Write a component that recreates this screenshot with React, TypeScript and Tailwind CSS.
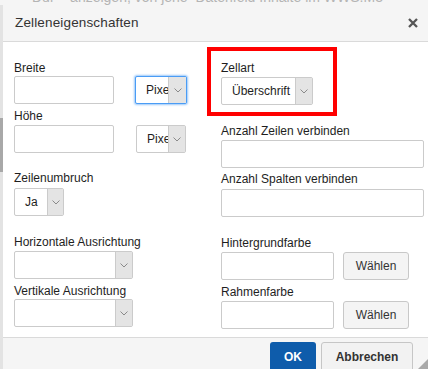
import React from "react";

function Chevron() {
  return (
    <svg width="8" height="5" viewBox="0 0 8 5" fill="none">
      <polyline points="0.5,0.5 4,4 7.5,0.5" stroke="#8a8a8a" strokeWidth="1" />
    </svg>
  );
}

function Select({
  value,
  width,
  arrow = 17,
  focused = false,
}: {
  value: string;
  width: string;
  arrow?: number;
  focused?: boolean;
}) {
  return (
    <div
      className={`flex h-[28px] ${width} rounded-[2px] border bg-white ${
        focused
          ? "border-[#4a9cf5] shadow-[0_0_2px_1px_rgba(74,156,245,0.55)]"
          : "border-[#cbcbcb]"
      }`}
    >
      <div className="flex-1 overflow-hidden whitespace-nowrap pl-[10px] text-[12px] leading-[26px]">
        {value}
      </div>
      <div
        className="flex items-center justify-center border-l border-[#cbcbcb] bg-[#e4e4e4]"
        style={{ width: arrow }}
      >
        <Chevron />
      </div>
    </div>
  );
}

function Input({ width }: { width: string }) {
  return (
    <div className={`h-[28px] ${width} rounded-[2px] border border-[#cbcbcb] bg-white`} />
  );
}

function Label({ text, className = "" }: { text: string; className?: string }) {
  return (
    <div className={`h-[15px] whitespace-nowrap text-[12px] leading-[15px] ${className}`}>
      {text}
    </div>
  );
}

function ColorRow() {
  return (
    <div className="mt-[1px] flex">
      <Input width="w-[113px]" />
      <button className="ml-[9px] h-[28px] w-[66px] rounded-[3px] border border-[#c8c8c8] bg-[#f4f4f4] text-[12px] text-[#333]">
        Wählen
      </button>
    </div>
  );
}

export default function App() {
  return (
    <div className="relative h-[369px] w-[428px] overflow-hidden bg-[#f5f5f5] font-['Liberation_Sans',Arial,sans-serif] text-[#1e1e1e]">
      {/* page behind the dialog, only its bottom edge shows */}
      <div className="h-[5px] overflow-hidden whitespace-nowrap pl-[32px] text-[14px] leading-[14px] text-[#b4b4b4]">
        <div className="mt-[-10px]">
          Dur&nbsp;&nbsp;&nbsp;&nbsp;anzeigen, von jene&nbsp;&nbsp;Datenfeld Inhalte im WWS.M3
        </div>
      </div>

      <div className="flex">
        <div className="flex h-[364px] w-[3px] flex-col bg-[#e3e3e3]">
          <div className="h-[113px]" />
          <div className="h-[54px] bg-[#a8a8a8]" />
        </div>

        <div className="flex flex-1 flex-col">
          {/* header */}
          <div className="flex h-[37px] items-center justify-between border-b border-[#dadada] bg-[#f5f5f5] pl-[12px] pr-[10px]">
            <span className="text-[13.5px] tracking-[0.15px] text-[#333]">Zelleneigenschaften</span>
            <svg width="10" height="10" viewBox="0 0 10 10">
              <path d="M1 1L9 9M9 1L1 9" stroke="#555" strokeWidth="2.3" />
            </svg>
          </div>

          {/* body */}
          <div className="flex h-[295px] bg-white pl-[11px]">
            <div className="w-[207px]">
              <Label text="Breite" className="mt-[19px]" />
              <div className="flex">
                <Input width="w-[100px]" />
                <div className="ml-[21px]">
                  <Select value="Pixel" width="w-[52px]" arrow={18} focused />
                </div>
              </div>
              <Label text="Höhe" className="mt-[5px]" />
              <div className="mt-[1px] flex">
                <Input width="w-[100px]" />
                <div className="ml-[22px]">
                  <Select value="Pixel" width="w-[50px]" />
                </div>
              </div>
              <Label text="Zeilenumbruch" className="mt-[18px]" />
              <div className="mt-[2px]">
                <Select value="Ja" width="w-[50px]" arrow={16} />
              </div>
              <Label text="Horizontale Ausrichtung" className="mt-[19px]" />
              <div className="mt-[1px]">
                <Select value="" width="w-[119px]" />
              </div>
              <Label text="Vertikale Ausrichtung" className="mt-[5px]" />
              <div>
                <Select value="" width="w-[119px]" />
              </div>
            </div>

            <div className="w-[203px]">
              <div className="ml-[-14px] mt-[5px] w-[130px] border-4 border-[#ff0000] pb-[7px] pl-[10px] pt-[10px]">
                <Label text="Zellart" />
                <div className="mt-[1px]">
                  <Select value="Überschrift" width="w-[92px]" />
                </div>
              </div>
              <Label text="Anzahl Zeilen verbinden" className="mt-[8px]" />
              <div className="mt-[1px]">
                <Input width="w-[203px]" />
              </div>
              <Label text="Anzahl Spalten verbinden" className="mt-[4px]" />
              <div className="mt-[2px]">
                <Input width="w-[203px]" />
              </div>
              <Label text="Hintergrundfarbe" className="mt-[19px]" />
              <ColorRow />
              <Label text="Rahmenfarbe" className="mt-[5px]" />
              <ColorRow />
            </div>
          </div>

          {/* footer */}
          <div className="flex h-[40px] justify-end gap-[5px] border-t border-[#dadada] bg-[#f5f5f5] pr-[15px] pt-[4px]">
            <button className="h-[30px] w-[46px] rounded-[3px] bg-[#0e5cab] text-[12px] font-bold text-white">
              OK
            </button>
            <button className="h-[30px] w-[92px] rounded-[3px] border border-[#c6c6c6] bg-[#f2f2f2] text-[12px] font-bold text-[#333]">
              Abbrechen
            </button>
          </div>
        </div>
      </div>

      <svg className="absolute bottom-0 right-0" width="10" height="10" viewBox="0 0 10 10">
        <polygon points="10,0 10,10 0,10" fill="#a9a9a9" />
      </svg>
    </div>
  );
}
